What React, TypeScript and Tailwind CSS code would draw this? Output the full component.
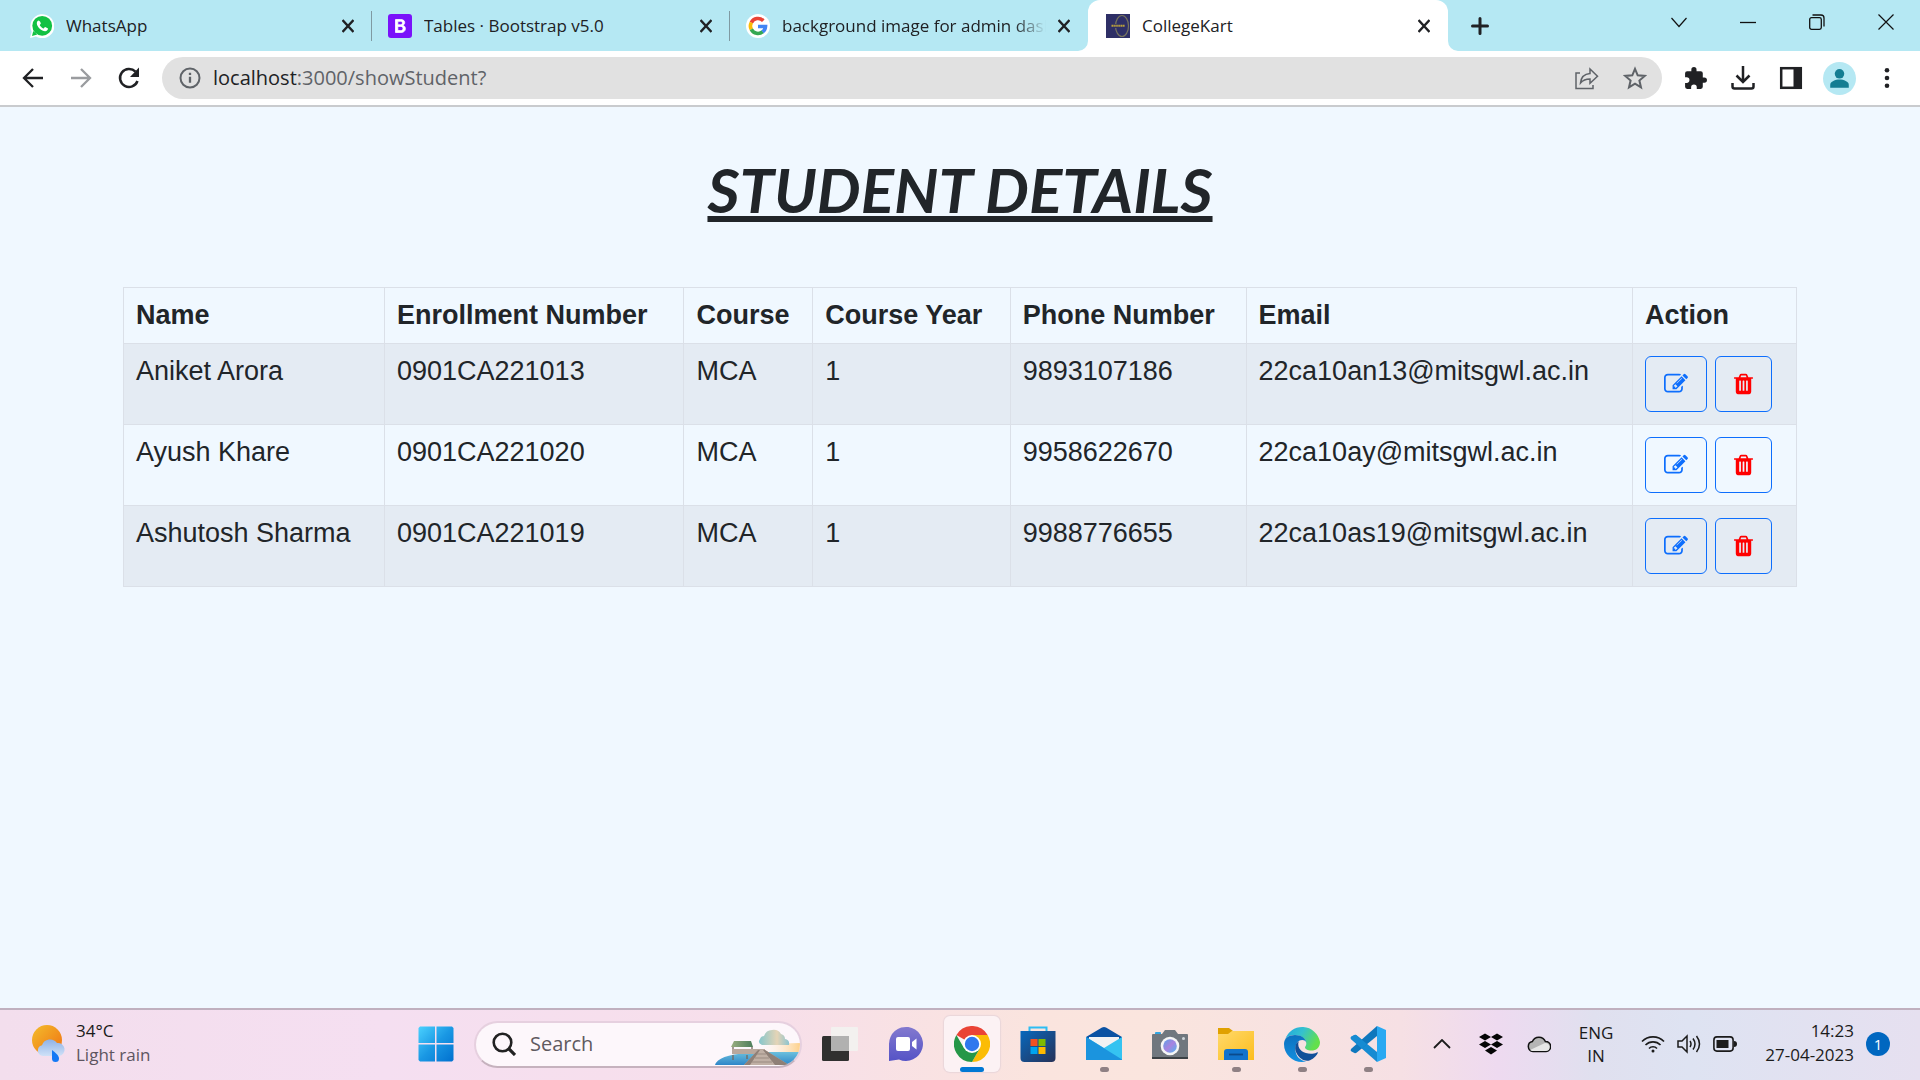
import React from 'react';

function Cross() {
  return (
    <svg viewBox="0 0 12 14" className="h-[14px] w-3" stroke="#202124" strokeWidth="2.4" fill="none">
      <path d="M0.5 1 11.500 13M11.500 1 .5 13" />
    </svg>
  );
}

function WhatsAppIcon() {
  return (
    <svg viewBox="0 0 24 24" className="size-6 shrink-0">
      <path d="M0 24l1.700-6.200A12 12 0 1 1 6 22.400z" fill="#fff" />
      <circle cx="12.200" cy="11.800" r="9.900" fill="#12c143" />
      <path d="M2 22l1.300-5 4 3.600z" fill="#12c143" />
      <path d="M8.500 6.500c-.5 0-1.700.9-1.700 2.700 0 3.800 5 8 8.300 8 1.800 0 2.900-1.200 2.900-2.600 0-.5-2.600-1.700-2.900-1.700-.6 0-1 1.500-1.600 1.500-.8 0-3.700-2.600-3.700-3.500 0-.5 1-.9 1-1.500 0-.5-.9-2.900-2.300-2.900z" fill="#fff" />
    </svg>
  );
}

function BootstrapIcon() {
  return (
    <svg viewBox="0 0 24 24" className="size-6 shrink-0">
      <rect width="24" height="24" rx="3" fill="#7a12fa" />
      <path d="M7.500 5.500h5.300c2.400 0 3.900 1.200 3.900 3.100 0 1.400-.8 2.400-2 2.800 1.700.3 2.700 1.500 2.700 3.200 0 2.400-1.700 3.900-4.500 3.900H7.500zM9.800 7.300v3.500h2.400c1.400 0 2.200-.6 2.200-1.800 0-1.100-.7-1.700-2-1.700zm0 5.100v4.200h2.700c1.600 0 2.500-.7 2.500-2.100s-.9-2.100-2.700-2.100z" fill="#fff" stroke="#fff" strokeWidth=".8" />
    </svg>
  );
}

function GoogleIcon() {
  return (
    <svg viewBox="0 0 24 24" className="size-6 shrink-0">
      <circle cx="12" cy="12" r="12" fill="#fff" />
      <g fill="none" strokeWidth="3.600">
        <path d="M17.300 6.700A7.500 7.500 0 0 0 5.300 8.600" stroke="#ea4335" />
        <path d="M5.300 8.500a7.500 7.500 0 0 0 0 7" stroke="#fbbc05" />
        <path d="M5.300 15.400a7.500 7.500 0 0 0 11.500 2.300" stroke="#34a853" />
        <path d="M16.600 17.900a7.500 7.500 0 0 0 2.900-5.400H12" stroke="#4285f4" />
      </g>
    </svg>
  );
}

function CollegeKartIcon() {
  return (
    <svg viewBox="0 0 24 24" className="size-6 shrink-0">
      <rect width="24" height="24" fill="#2e2f66" />
      <ellipse cx="16" cy="12" rx="6.500" ry="10.500" fill="none" stroke="#77755f" strokeWidth="1.200" />
      <path d="M5 12h14" stroke="#2e2f66" strokeWidth="4" />
      <path d="M5.500 11.800h13.500" stroke="#b9a13c" strokeWidth="2" strokeDasharray="1.500 .4" />
    </svg>
  );
}

const tabs = [
  { title: 'WhatsApp', icon: <WhatsAppIcon />, line: true },
  { title: 'Tables · Bootstrap v5.0', icon: <BootstrapIcon />, line: true },
  { title: 'background image for admin dashboard', icon: <GoogleIcon />, line: false },
];

function TabStrip() {
  return (
    <div className="flex h-[51px] bg-[#b5e8f3] pl-[14px]">
      {tabs.map((t) => (
        <div key={t.title} className="flex w-[358px] items-center pl-4">
          {t.icon}
          <span className={'ml-3 flex-1 overflow-hidden whitespace-nowrap text-[17px] text-[#202124]' + (t.line ? '' : ' [mask-image:linear-gradient(90deg,#000_88%,transparent)]')}>
            {t.title}
          </span>
          <button aria-label={'Close ' + t.title} className="ml-3 mr-[17px]"><Cross /></button>
          <span className={t.line ? 'h-[30px] w-px bg-[#7f9aa2]' : 'h-[30px] w-px'} />
        </div>
      ))}
      <div className="relative flex w-[360px] items-center rounded-t-[12px] bg-white pl-[18px]">
        <svg viewBox="0 0 10 10" className="absolute -left-[10px] bottom-0 size-[10px]" fill="#fff"><path d="M10 0v10H0A10 10 0 0 0 10 0z" /></svg>
        <svg viewBox="0 0 10 10" className="absolute -right-[10px] bottom-0 size-[10px]" fill="#fff"><path d="M0 0v10h10A10 10 0 0 1 0 0z" /></svg>
        <CollegeKartIcon />
        <span className="ml-3 flex-1 text-[17px] text-[#202124]">CollegeKart</span>
        <button aria-label="Close CollegeKart" className="mr-[18px]"><Cross /></button>
      </div>
      <button aria-label="New tab" className="ml-[23px]">
        <svg viewBox="0 0 18 18" className="size-[18px]" stroke="#202124" strokeWidth="3" strokeLinecap="round"><path d="M9 1.500v15M1.500 9h15" /></svg>
      </button>
      <div className="ml-auto flex h-[43px] items-center gap-[53px] pr-[26px]">
        <button aria-label="Search tabs"><svg viewBox="0 0 16 16" className="size-4" fill="none" stroke="#111" strokeWidth="1.200"><path d="M.5 4 8 12.500 15.500 4" /></svg></button>
        <button aria-label="Minimize"><svg viewBox="0 0 16 16" className="size-4" stroke="#111" strokeWidth="1.300"><path d="M0 8.500h16" /></svg></button>
        <button aria-label="Restore"><svg viewBox="0 0 16 16" className="size-4" fill="none" stroke="#111" strokeWidth="1.300"><rect x=".7" y="3.700" width="11.600" height="11.600" rx="1.800" /><path d="M3.500 1h8.500a3 3 0 0 1 3 3v8.500" /></svg></button>
        <button aria-label="Close window"><svg viewBox="0 0 16 16" className="size-4" stroke="#111" strokeWidth="1.200"><path d="M.5.5l15 15M15.500.5l-15 15" /></svg></button>
      </div>
    </div>
  );
}

function Toolbar() {
  return (
    <div className="flex h-14 items-center border-b-2 border-[#c9cbce] bg-white pl-[21px] pr-[21px]">
      <button aria-label="Back"><svg viewBox="0 0 24 24" className="size-6" fill="none" stroke="#202124" strokeWidth="2.300"><path d="M22 12H3.500M12 3l-9 9 9 9" /></svg></button>
      <button aria-label="Forward" className="ml-6"><svg viewBox="0 0 24 24" className="size-6" fill="none" stroke="#9a9c9f" strokeWidth="2.300"><path d="M2 12h18.500M12 3l9 9-9 9" /></svg></button>
      <button aria-label="Reload" className="ml-6"><svg viewBox="0 0 24 24" className="size-6"><path d="M20.500 15A9 9 0 1 1 18.500 5.700" fill="none" stroke="#202124" strokeWidth="2.500" /><path d="M22 1.500V11h-9z" fill="#202124" /></svg></button>
      <div className="ml-[21px] flex h-[42px] flex-1 items-center rounded-full bg-[#e1e1e1] pl-4 pr-[15px]">
        <svg viewBox="0 0 24 24" className="size-6 shrink-0" fill="none" stroke="#5f6368" strokeWidth="2"><circle cx="12" cy="12" r="9.500" /><path d="M12 10.800v6M12 6.800v2.300" strokeWidth="2.300" /></svg>
        <span className="ml-[11px] flex-1 text-[20px] text-[#5f6368]"><span className="text-[#202124]">localhost</span>:3000/showStudent?</span>
        <button aria-label="Share"><svg viewBox="0 0 24 24" className="size-6" fill="none" stroke="#5f6368" strokeWidth="1.500"><path d="M5 7H1v15.500h17V19" /><path d="M5.500 17c.5-5.500 3.500-9 9.500-9.500V3l7.500 7.200-7.500 7V13c-4.500 0-7 1-9.500 4z" /></svg></button>
        <button aria-label="Bookmark" className="ml-6"><svg viewBox="0 0 24 24" className="size-6" fill="none" stroke="#5f6368" strokeWidth="2"><path d="M12 2.800l2.700 6.500 7 .6-5.300 4.600 1.600 6.900-6-3.700-6 3.700 1.600-6.900L2.300 9.900l7-.6z" /></svg></button>
      </div>
      <button aria-label="Extensions" className="ml-[21px]"><svg viewBox="0 0 24 24" className="size-[25px]" fill="#202124"><path d="M20.500 11H19V7a2 2 0 0 0-2-2h-4V3.500a2.500 2.500 0 0 0-5 0V5H4a2 2 0 0 0-2 2v3.800h1.500a2.700 2.700 0 0 1 0 5.400H2V20a2 2 0 0 0 2 2h3.800v-1.500a2.700 2.700 0 0 1 5.400 0V22H17a2 2 0 0 0 2-2v-4h1.500a2.500 2.500 0 0 0 0-5z" /></svg></button>
      <button aria-label="Downloads" className="ml-[23px]"><svg viewBox="0 0 24 24" className="size-6" fill="none" stroke="#202124" strokeWidth="2.500"><path d="M12 0v16M5.500 9.500 12 16l6.500-6.500M1.500 17v3.500a2 2 0 0 0 2 2h17a2 2 0 0 0 2-2V17" /></svg></button>
      <button aria-label="Side panel" className="ml-6"><svg viewBox="0 0 24 24" className="size-6"><rect x="2.200" y="2.200" width="19.600" height="19.600" fill="none" stroke="#202124" strokeWidth="2.500" /><path d="M14.500 2h7.500v20h-7.500z" fill="#202124" /></svg></button>
      <button aria-label="Profile" className="ml-5"><svg viewBox="0 0 32 32" className="size-[33px]"><circle cx="16" cy="16" r="16" fill="#b5e8f3" /><circle cx="16" cy="11.500" r="4.600" fill="#147d92" /><path d="M7 25v-3c0-3 5-5 9-5s9 2 9 5v3z" fill="#147d92" /></svg></button>
      <button aria-label="Menu" className="ml-[19px]"><svg viewBox="0 0 24 24" className="size-6" fill="#202124"><circle cx="12" cy="4.200" r="2.300" /><circle cx="12" cy="12" r="2.300" /><circle cx="12" cy="19.800" r="2.300" /></svg></button>
    </div>
  );
}

const columns = [
  { label: 'Name', width: 'w-[15.6%]' },
  { label: 'Enrollment Number', width: 'w-[17.9%]' },
  { label: 'Course', width: 'w-[7.7%]' },
  { label: 'Course Year', width: 'w-[11.8%]' },
  { label: 'Phone Number', width: 'w-[14.1%]' },
  { label: 'Email', width: 'w-[23.1%]' },
  { label: 'Action', width: 'w-[9.8%]' },
];

const students = [
  ['Aniket Arora', '0901CA221013', 'MCA', '1', '9893107186', '22ca10an13@mitsgwl.ac.in'],
  ['Ayush Khare', '0901CA221020', 'MCA', '1', '9958622670', '22ca10ay@mitsgwl.ac.in'],
  ['Ashutosh Sharma', '0901CA221019', 'MCA', '1', '9988776655', '22ca10as19@mitsgwl.ac.in'],
];

function EditIcon() {
  return (
    <svg viewBox="0 0 1792 1792" className="size-6" fill="#0d6efd">
      <path d="M888 1184l116-116-152-152-116 116v56h96v96h56zm440-720q-16-16-33 1l-350 350q-17 17-1 33t33-1l350-350q17-17 1-33zm80 594v190q0 119-84.500 203.500t-203.500 84.500h-832q-119 0-203.500-84.500t-84.500-203.500v-832q0-119 84.500-203.500t203.500-84.500h832q63 0 117 25 15 7 18 23 3 17-9 29l-49 49q-14 14-32 8-23-6-45-6h-832q-66 0-113 47t-47 113v832q0 66 47 113t113 47h832q66 0 113-47t47-113v-126q0-13 9-22l64-64q15-15 35-7t20 29zm-96-738l288 288-672 672h-288v-288zm444 132l-92 92-288-288 92-92q28-28 68-28t68 28l152 152q28 28 28 68t-28 68z" />
    </svg>
  );
}

function TrashIcon() {
  return (
    <svg viewBox="192 0 1408 1792" className="h-6 w-[19px]" fill="#ff0000">
      <path d="M704 1376v-704q0-14-9-23t-23-9h-64q-14 0-23 9t-9 23v704q0 14 9 23t23 9h64q14 0 23-9t9-23zm256 0v-704q0-14-9-23t-23-9h-64q-14 0-23 9t-9 23v704q0 14 9 23t23 9h64q14 0 23-9t9-23zm256 0v-704q0-14-9-23t-23-9h-64q-14 0-23 9t-9 23v704q0 14 9 23t23 9h64q14 0 23-9t9-23zm-544-992h448l-48-117q-7-9-17-11h-317q-10 2-17 11zm928 32v64q0 14-9 23t-23 9h-96v948q0 83-47 143.500t-113 60.500h-832q-66 0-113-58.500t-47-141.500v-952h-96q-14 0-23-9t-9-23v-64q0-14 9-23t23-9h309l70-167q15-37 54-63t79-26h320q40 0 79 26t54 63l70 167h309q14 0 23 9t9 23z" />
    </svg>
  );
}

function StudentPage() {
  return (
    <main className="flex-1 bg-[#f0f8ff] px-[123px] font-['Liberation_Sans',Arial,sans-serif] text-[#212529]">
      <h1 className="pt-[46px] text-center font-['Lato',sans-serif] text-[62px] font-bold italic leading-[72px] underline decoration-[6px] underline-offset-[3px] [text-decoration-skip-ink:none]">
        STUDENT DETAILS
      </h1>
      <table className="mt-[62px] w-full table-fixed border-collapse text-left text-[27px] leading-[31px]">
        <thead>
          <tr>
            {columns.map((c) => (
              <th key={c.label} scope="col" className={'whitespace-nowrap border border-[#dbe0e8] p-3 font-bold ' + c.width}>{c.label}</th>
            ))}
          </tr>
        </thead>
        <tbody>
          {students.map((row) => (
            <tr key={row[1]} className="odd:bg-[#e4ebf3]">
              {row.map((cell, i) => (
                <td key={i} className="whitespace-nowrap border border-[#dbe0e8] p-3 align-top">{cell}</td>
              ))}
              <td className="border border-[#dbe0e8] p-3 align-top">
                <div className="flex gap-2">
                  <button aria-label={'Edit ' + row[0]} className="flex h-14 w-[62px] items-center justify-center rounded-md border border-[#0d6efd]"><EditIcon /></button>
                  <button aria-label={'Delete ' + row[0]} className="flex h-14 w-[57px] items-center justify-center rounded-md border border-[#0d6efd]"><TrashIcon /></button>
                </div>
              </td>
            </tr>
          ))}
        </tbody>
      </table>
    </main>
  );
}

function SearchArt() {
  return (
    <svg viewBox="0 0 85 38" className="h-[38px] w-[85px]">
      <defs>
        <linearGradient id="sky" x1="0" x2="1" y1="0" y2="0"><stop offset="0" stopColor="#fdf3e8" stopOpacity="0" /><stop offset="1" stopColor="#fdd18c" /></linearGradient>
        <linearGradient id="cl" x1="0" x2="1"><stop offset="0" stopColor="#86c6cc" /><stop offset=".6" stopColor="#e5d4b6" /><stop offset="1" stopColor="#8cc4cf" /></linearGradient>
        <linearGradient id="sea" x1="0" x2="0" y1="0" y2="1"><stop offset="0" stopColor="#6cc0dd" /><stop offset="1" stopColor="#2e86c8" /></linearGradient>
        <linearGradient id="roof" x1="0" x2="1"><stop offset="0" stopColor="#9aae80" /><stop offset="1" stopColor="#4d7d5b" /></linearGradient>
      </defs>
      <path d="M46 24V19q20-4 39-4v9z" fill="url(#sky)" />
      <path d="M0 37q3-10 32-12l8-1v13z" fill="url(#sea)" />
      <path d="M50 24h35q-2 9-12 13H60z" fill="url(#sea)" />
      <path d="M47 17q-5-2-2-6 1-3 4-3 2-6 8-6 6-1 9 4 4 1 4 5 5 1 4 6z" fill="url(#cl)" />
      <path d="M16 19l3-6h17l2 6z" fill="url(#roof)" />
      <path d="M18 19v3M37 19v3M18 27v5M32 27v4" stroke="#76675d" strokeWidth="1.300" />
      <path d="M17 21h33v5H17z" fill="#b9a89d" />
      <path d="M43 22h7l24 15H29z" fill="#c0b0a5" />
      <path d="M29 37 43 22h2L35 37zM60 37 48 22h2l24 15z" fill="#8f8077" />
      <path d="M42 26h9M40 30h14M37 34h20" stroke="#9a8b81" />
    </svg>
  );
}

function TaskIcon({ name }: { name: string }) {
  const c = 'size-9';
  switch (name) {
    case 'Start':
      return (
        <svg viewBox="0 0 36 36" className={c}>
          <defs><linearGradient id="win" gradientUnits="userSpaceOnUse" x1="0" y1="0" x2="36" y2="36"><stop offset="0" stopColor="#4cd3ff" /><stop offset=".5" stopColor="#1a98e4" /><stop offset="1" stopColor="#006fce" /></linearGradient></defs>
          <path d="M2 .5h15V17H.5V2zM18.500.5H34L35.500 2v15h-17zM.5 18.500H17v17H2L.5 34zM18.500 18.500h17V34L34 35.500H18.500z" fill="url(#win)" />
        </svg>
      );
    case 'Task view':
      return (
        <svg viewBox="0 0 36 36" className={c}>
          <rect x="0" y="10" width="27" height="25" rx="1.500" fill="#30302f" />
          <rect x="9" y="1" width="27" height="24" rx="1" fill="#f2f2f0" fillOpacity=".92" />
          <path d="M9 10h18v15H9z" fill="#b1b1b0" />
        </svg>
      );
    case 'Chat':
      return (
        <svg viewBox="0 0 36 36" className={c}>
          <defs><linearGradient id="chat" x1="0" y1="0" x2="0" y2="1"><stop offset="0" stopColor="#8379cf" /><stop offset="1" stopColor="#5553c6" /></linearGradient></defs>
          <path d="M1 35V18a17 17 0 1 1 10 15.400z" fill="url(#chat)" />
          <rect x="8" y="11" width="14" height="14" rx="2" fill="#fff" />
          <path d="M24 16l4.500-3.500v11L24 20z" fill="#fff" />
        </svg>
      );
    case 'Chrome':
      return (
        <svg viewBox="0 0 36 36" className={c}>
          <path d="M18 18 2.400 9A18 18 0 0 1 33.600 9z" fill="#ea4335" />
          <path d="M18 9h15.600A18 18 0 0 1 18 36l7.800-13.500z" fill="#fbbc05" />
          <path d="M2.400 9l7.800 13.500L25.800 22.500 18 36A18 18 0 0 1 2.400 9z" fill="#259748" />
          <circle cx="18" cy="18" r="9" fill="#fff" /><circle cx="18" cy="18" r="7.200" fill="#2f78ee" />
        </svg>
      );
    case 'Store':
      return (
        <svg viewBox="0 0 36 36" className={c}>
          <defs><linearGradient id="store" x1="0" y1="0" x2="1" y2="1"><stop offset="0" stopColor="#0868bd" /><stop offset="1" stopColor="#263258" /></linearGradient></defs>
          <path d="M9.500 6V1.500h17V6" fill="none" stroke="#2dbdf3" strokeWidth="2" />
          <path d="M.5 5h35v27a4 4 0 0 1-4 4h-27a4 4 0 0 1-4-4z" fill="url(#store)" />
          <path d="M10.500 13h7v7h-7z" fill="#f25022" /><path d="M18.500 13h7v7h-7z" fill="#7fba00" /><path d="M10.500 21h7v7h-7z" fill="#00a4ef" /><path d="M18.500 21h7v7h-7z" fill="#ffb900" />
        </svg>
      );
    case 'Mail':
      return (
        <svg viewBox="0 0 36 36" className={c}>
          <path d="M0 11 16 1.500q2-1.200 4 0L36 11v6H0z" fill="#0a52a3" />
          <path d="M3 11h30v12H3z" fill="#f2f2f3" />
          <path d="M0 11l18 11 18-11v23H0z" fill="#35c3f1" />
          <path d="M0 11l36 22.500V34H0z" fill="#1b94de" />
        </svg>
      );
    case 'Camera':
      return (
        <svg viewBox="0 0 36 36" className={c}>
          <defs><linearGradient id="lens" x1="0" y1="0" x2="1" y2="1"><stop offset="0" stopColor="#5ba1e7" /><stop offset=".5" stopColor="#a983e0" /><stop offset="1" stopColor="#4cb7ee" /></linearGradient></defs>
          <rect x="3" y="6" width="6" height="4" rx="1" fill="#31a6e3" />
          <path d="M1 8h9l3-4h10l3 4h9q1 0 1 1v23q0 1-1 1H1q-1 0-1-1V9q0-1 1-1z" fill="#70777e" />
          <path d="M0 31h36v1.500q0 .5-1 .5H1q-1 0-1-.5z" fill="#3b4044" />
          <circle cx="18" cy="20" r="9.300" fill="#f5f5f5" /><circle cx="18" cy="20" r="6.800" fill="url(#lens)" />
          <circle cx="31.500" cy="12.500" r="1.500" fill="#cfd6da" />
        </svg>
      );
    case 'File Explorer':
      return (
        <svg viewBox="0 0 36 36" className={c}>
          <defs><linearGradient id="fold" x1="0" y1="0" x2="1" y2="1"><stop offset="0" stopColor="#ffd96b" /><stop offset="1" stopColor="#fcbd1d" /></linearGradient></defs>
          <path d="M0 2h11l4 3v5H0z" fill="#e0a100" />
          <path d="M0 8h10l4-3h22v29H0z" fill="url(#fold)" />
          <path d="M6 34V26q0-3 3-3h18q3 0 3 3v8z" fill="#1173cb" /><path d="M11 28.500h14" stroke="#0b4a8b" strokeWidth="1.800" />
        </svg>
      );
    case 'Edge':
      return (
        <svg viewBox="0 0 36 36" className={c}>
          <defs>
            <linearGradient id="e1" x1="0" y1="0" x2="1" y2=".4"><stop offset="0" stopColor="#1fa5df" /><stop offset=".5" stopColor="#35c1cf" /><stop offset="1" stopColor="#63e04c" /></linearGradient>
            <linearGradient id="e2" x1="0" y1="0" x2="0" y2="1"><stop offset="0" stopColor="#0d70bf" /><stop offset="1" stopColor="#1290e0" /></linearGradient>
          </defs>
          <path d="M1 14A18 18 0 0 1 36 16c0 6-4 8.500-8.500 8.500-4 0-6.500-1.500-6.500-3 0-1 1.300-1.500 1.300-4C22.300 12 16 9 11 9S2 11 1 14z" fill="url(#e1)" />
          <path d="M0 18C0 12 5 9 11 9c6 0 11.300 3.500 11.300 8 0-2-2-3-4-3-5 0-7 5-7 9 0 7 5 12 11 12.200Q20 36 18 36A18 18 0 0 1 0 18z" fill="url(#e2)" />
          <path d="M14.500 15.500C11 17.500 10 23 13 28c3 5 8 8 13 6.200 4-1.700 7-5 7.800-7.200.3-.8-.3-.9-1-.6-2 1-3.800 1.300-6 1.300-7 0-12.500-4-12.500-9 0-1.300 0-2 .7-3.200z" fill="#114f99" />
        </svg>
      );
    default:
      return (
        <svg viewBox="0 0 36 36" className={c}>
          <path d="M1.500 10.500l3-1.500q1-.5 2 .3L27 26v10L1 13q-1-1.500.5-2.500z" fill="#168bd2" />
          <path d="M1.500 25.500l3 1.500q1 .5 2-.3L27 10V0L1 23q-1 1.500.5 2.500z" fill="#0e77bd" />
          <path d="M1.500 10.500l3-1.500q1-.5 2 .3L17 18l-5 4.700L1 13q-1-1.500.5-2.500z" fill="#168bd2" />
          <path d="M27 0l9 4v28l-9 4z" fill="#29a9f2" />
        </svg>
      );
  }
}

const apps = [
  { name: 'Task view', state: '' },
  { name: 'Chat', state: '' },
  { name: 'Chrome', state: 'active' },
  { name: 'Store', state: '' },
  { name: 'Mail', state: 'open' },
  { name: 'Camera', state: '' },
  { name: 'File Explorer', state: 'open' },
  { name: 'Edge', state: 'open' },
  { name: 'Visual Studio Code', state: 'open' },
];

function Weather() {
  return (
    <svg viewBox="0 0 34 38" className="h-[38px] w-[34px]">
      <defs>
        <linearGradient id="sun" x1="0" y1="0" x2="1" y2="1"><stop offset="0" stopColor="#f3bd2c" /><stop offset="1" stopColor="#f07012" /></linearGradient>
        <linearGradient id="cloud" x1="0" y1="0" x2="0" y2="1"><stop offset="0" stopColor="#8fb2e8" /><stop offset="1" stopColor="#cfe1f7" /></linearGradient>
      </defs>
      <circle cx="15" cy="16" r="15" fill="url(#sun)" />
      <path d="M11 32a5.500 5.500 0 0 1-1-10.800A8.500 8.500 0 0 1 25 19a6.500 6.500 0 1 1 2 13z" fill="url(#cloud)" />
      <path d="M20 26q7 5 7 8.500a3.500 3.500 0 0 1-7 0z" fill="#1479f5" />
    </svg>
  );
}

function Taskbar() {
  return (
    <footer className="flex h-[72px] items-center border-t-2 border-[#c0b0bf] bg-[linear-gradient(90deg,#f3deed_0%,#f5dff1_20%,#f7dfea_40%,#fae4de_54%,#fae5de_60%,#f6e0e4_73%,#eedaf0_78%,#e0e0ef_83%,#dee3f2_88%,#e6e0f0_100%)] pb-0.5">
      <div className="flex flex-1 items-center pb-0.5 pl-8">
        <Weather />
        <div className="ml-[10px] whitespace-nowrap text-[17px] leading-6 text-[#1b1b1b]">
          <div>34°C</div>
          <div className="text-[#5d5560]">Light rain</div>
        </div>
      </div>
      <div className="flex shrink-0 items-center">
        <button aria-label="Start" className="mr-5"><TaskIcon name="Start" /></button>
        <label className="mr-[5px] flex h-[47px] w-[328px] items-center overflow-hidden rounded-full border-2 border-[#e6d0df] border-b-[#c6b2be] bg-[#fdf7fb] pl-4">
          <svg viewBox="0 0 24 24" className="size-6" fill="none" stroke="#222" strokeWidth="2.600"><circle cx="10.500" cy="10.500" r="8.800" /><path d="M17 17l6 6" strokeWidth="3.200" /></svg>
          <input aria-label="Search" placeholder="Search" className="ml-[14px] w-40 bg-transparent text-[20px] placeholder:text-[#5f5a5f]" />
          <span className="ml-auto self-end"><SearchArt /></span>
        </label>
        {apps.map((a) => (
          <button
            key={a.name}
            aria-label={a.name}
            className={'relative mx-[5px] flex h-14 w-14 items-center justify-center rounded-md' + (a.state === 'active' ? ' bg-[#fcf2f4] shadow-[0_0_1px_1px_#e9d6da]' : '')}
          >
            <TaskIcon name={a.name} />
            {a.state === 'active' && <span className="absolute bottom-0 h-[5px] w-6 rounded-full bg-[#0078d4]" />}
            {a.state === 'open' && <span className="absolute bottom-0 h-[5px] w-[9px] rounded-full bg-[#8f8084]" />}
          </button>
        ))}
      </div>
      <div className="flex w-[519px] shrink-0 items-center justify-end whitespace-nowrap pr-[30px] text-[#1b1b1b]">
        <button aria-label="Hidden icons"><svg viewBox="0 0 18 10" className="h-[10px] w-[18px]" fill="none" stroke="#1b1b1b" strokeWidth="1.800"><path d="M1 9l8-8 8 8" /></svg></button>
        <svg viewBox="0 0 24 22" className="ml-7 h-[22px] w-6"><path d="M6 .5l6 3.500-6 3.500L0 4zM18 .5L24 4l-6 3.500L12 4zM6 8l6 3.500L6 15l-6-3.500zM18 8l6 3.500-6 3.500-6-3.500zM12 14l6 3.500-6 4-6-4z" fill="#050505" /></svg>
        <svg viewBox="0 0 24 18" className="ml-6 h-[18px] w-6"><path d="M6 16.500a5 5 0 0 1-.6-9.900 7 7 0 0 1 13-.1A5 5 0 0 1 19 16.500z" fill="#b5b5b5" stroke="#111" strokeWidth="1.500" /><path d="M3 15l15-7q4 0 4.500 4t-4 4H5z" fill="#e7e7e7" /></svg>
        <div className="ml-7 text-center text-[17px] leading-[23px]"><div>ENG</div><div>IN</div></div>
        <svg viewBox="0 0 24 18" className="ml-7 h-[18px] w-6" fill="none" stroke="#1b1b1b" strokeWidth="1.600"><path d="M1 6.500a15.500 15.500 0 0 1 22 0M4.500 10a10.600 10.600 0 0 1 15 0M8 13.500a5.600 5.600 0 0 1 8 0" /><circle cx="12" cy="16" r="1.500" fill="#1b1b1b" stroke="none" /></svg>
        <svg viewBox="0 0 24 20" className="ml-3 h-5 w-6" fill="none" stroke="#1b1b1b" strokeWidth="1.500"><path d="M1 7h4l5-5v16l-5-5H1zM13 7q2 3 0 6M16 4.500q4 5.500 0 11M19.500 2q6 8 0 16" /></svg>
        <svg viewBox="0 0 24 16" className="ml-3 h-4 w-6"><rect x=".9" y=".9" width="19.200" height="14.200" rx="3" fill="none" stroke="#1b1b1b" strokeWidth="1.600" /><path d="M3.500 4h12v8h-12z" fill="#1b1b1b" /><path d="M21 5q3 0 3 3t-3 3z" fill="#1b1b1b" /></svg>
        <div className="ml-7 pb-0.5 text-right text-[17px] leading-6"><div>14:23</div><div>27-04-2023</div></div>
        <span className="ml-3 flex size-6 items-center justify-center rounded-full bg-[#0067c0] text-[15px] text-white">1</span>
      </div>
    </footer>
  );
}

export default function App() {
  return (
    <div className="flex min-h-screen flex-col font-['Open_Sans','Noto_Sans',sans-serif]">
      <header>
        <TabStrip />
        <Toolbar />
      </header>
      <StudentPage />
      <Taskbar />
    </div>
  );
}
